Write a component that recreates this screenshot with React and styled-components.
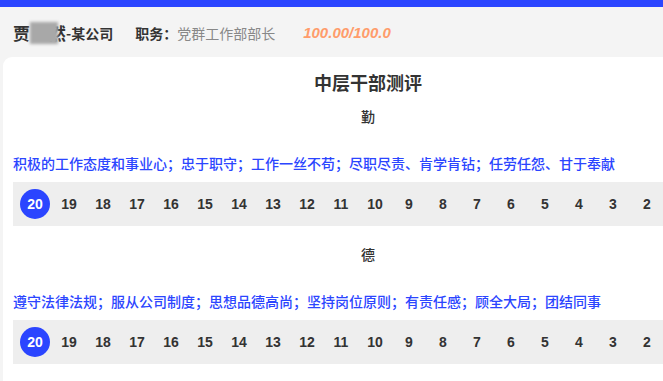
import React from "react";
import styled, { createGlobalStyle } from "styled-components";

const Global = createGlobalStyle`
  html, body {
    margin: 0;
    padding: 0;
    background: #f4f4f4;
    overflow: hidden;
    font-family: "Noto Sans CJK SC", "Noto Sans", sans-serif;
  }
`;

const BLUE = "#2b45ff";

const sections = [
  {
    label: "勤",
    desc: "积极的工作态度和事业心；忠于职守；工作一丝不苟；尽职尽责、肯学肯钻；任劳任怨、甘于奉献",
  },
  {
    label: "德",
    desc: "遵守法律法规；服从公司制度；思想品德高尚；坚持岗位原则；有责任感；顾全大局；团结同事",
  },
];

// only the scores that fit in the visible row
const scores = Array.from({ length: 19 }, (_, i) => 20 - i);

export default function App() {
  return (
    <Page>
      <Global />
      <TopBar />
      <Header>
        <Name>
          贾<Blur />然<Company>-某公司</Company>
        </Name>
        <Duty>
          <DutyLabel>职务：</DutyLabel>
          <DutyValue>党群工作部部长</DutyValue>
        </Duty>
        <Total>100.00/100.0</Total>
      </Header>
      <Card>
        <Title>中层干部测评</Title>
        {sections.map((s) => (
          <Section key={s.label}>
            <Label>{s.label}</Label>
            <Desc>{s.desc}</Desc>
            <ScoreRow>
              {scores.map((n) => (
                <Score key={n} active={n === 20}>
                  {n}
                </Score>
              ))}
            </ScoreRow>
          </Section>
        ))}
      </Card>
    </Page>
  );
}

const Page = styled.div`
  width: 663px;
  height: 381px;
  overflow: hidden;
  background: #f4f4f4;
`;

const TopBar = styled.div`
  height: 7px;
  background: ${BLUE};
`;

const Header = styled.div`
  height: 50px;
  display: flex;
  align-items: center;
  padding-left: 13px;
  padding-top: 1px;
  box-sizing: border-box;
  white-space: nowrap;
`;

const Name = styled.div`
  display: flex;
  align-items: center;
  font-size: 17px;
  font-weight: 700;
  color: #333;
`;

const Blur = styled.span`
  display: inline-block;
  width: 28px;
  height: 22px;
  margin: 0 -9px 0 0;
  background: #a8a8a8;
  filter: blur(1.5px);
  position: relative;
  z-index: 1;
`;

const Company = styled.span`
  font-size: 14px;
`;

const Duty = styled.div`
  margin-left: 22px;
  font-size: 14px;
`;

const DutyLabel = styled.span`
  font-weight: 700;
  color: #333;
`;

const DutyValue = styled.span`
  color: #888;
`;

const Total = styled.div`
  margin-left: 28px;
  font-family: "Liberation Sans", Arial, sans-serif;
  font-style: italic;
  font-weight: 700;
  font-size: 15px;
  color: #ff9c6b;
`;

const Card = styled.div`
  margin-left: 3px;
  width: 730px;
  min-height: 330px;
  background: #fff;
  border-radius: 9px 9px 0 0;
  padding: 13px 10px 0;
  box-sizing: border-box;
`;

const Title = styled.div`
  text-align: center;
  font-size: 18px;
  line-height: 24px;
  font-weight: 700;
  color: #333;
`;

const Section = styled.div`
  padding-top: 12px;
  padding-bottom: 6px;
`;

const Label = styled.div`
  text-align: center;
  font-size: 14px;
  line-height: 20px;
  font-weight: 500;
  color: #333;
`;

const Desc = styled.div`
  margin-top: 27px;
  font-size: 14px;
  line-height: 20px;
  font-weight: 500;
  color: ${BLUE};
  white-space: nowrap;
`;

const ScoreRow = styled.div`
  margin-top: 9px;
  height: 44px;
  background: #eeeeee;
  display: flex;
  align-items: center;
  gap: 4px;
  padding-left: 7px;
`;

const Score = styled.div`
  flex: 0 0 30px;
  height: 30px;
  border-radius: 50%;
  display: flex;
  align-items: center;
  justify-content: center;
  font-family: "Liberation Sans", Arial, sans-serif;
  font-weight: 700;
  font-size: 14px;
  color: ${(p) => (p.active ? "#fff" : "#333")};
  background: ${(p) => (p.active ? BLUE : "transparent")};
`;
